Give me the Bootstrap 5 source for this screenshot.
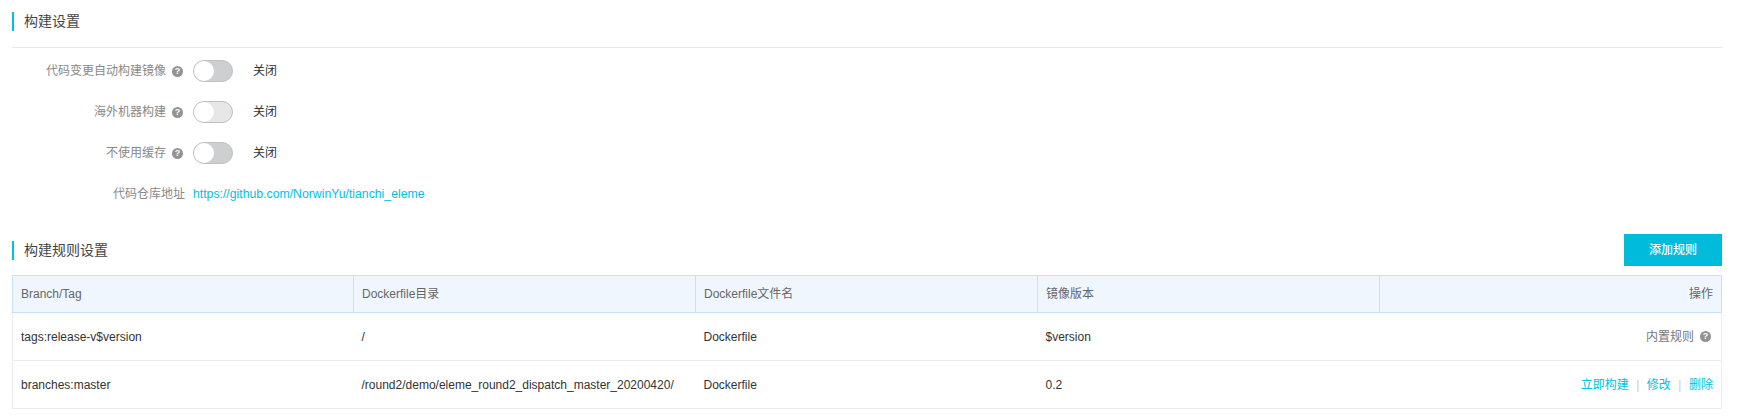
<!DOCTYPE html>
<html lang="zh-CN">

<head>
  <meta charset="UTF-8">
  <meta name="viewport" content="width=device-width, initial-scale=1.0">
  <title>构建设置</title>
  <link rel="stylesheet" href="https://cdn.jsdelivr.net/npm/bootstrap@5.3.0/dist/css/bootstrap.min.css">
  <style>
    body {
      font-family: "Liberation Sans", "Noto Sans CJK SC", sans-serif;
      font-size: 12px;
      color: #333;
      background: #fff;
    }

    .page-wrap {
      padding: 12px 15px 0 12px;
    }

    .section-title {
      border-left: 2px solid #00c1de;
      padding-left: 10px;
      font-size: 14px;
      line-height: 19px;
      height: 19px;
      color: #444;
    }

    .title-rule {
      border-bottom: 1px solid #e8e8e8;
      height: 17px;
      margin-bottom: 12px;
    }

    .setting-row {
      height: 22px;
      margin-bottom: 19px;
    }

    .setting-label {
      width: 181px;
      padding-right: 8px;
      color: #888;
    }

    .help-dot {
      width: 11px;
      height: 11px;
      border-radius: 50%;
      background: #939393;
      color: #fff;
      font-size: 9px;
      font-weight: 700;
      line-height: 11px;
      text-align: center;
    }

    .setting-label .help-dot {
      margin-left: 6px;
      margin-right: 2px;
    }

    .switch-box {
      position: relative;
      width: 40px;
      height: 22px;
      border: 1px solid #c0c0c0;
      border-radius: 11px;
      background: #cdcfd1;
    }

    .switch-box.is-light {
      background: #e6e7e7;
    }

    .switch-box::before {
      content: "";
      position: absolute;
      left: 0;
      top: 0;
      width: 20px;
      height: 20px;
      border-radius: 50%;
      background: #fff;
    }

    .switch-state {
      margin-left: 20px;
    }

    .brand-link {
      color: #00c1de;
      text-decoration: none;
    }

    .repo-link {
      font-size: 12.25px;
    }

    .rule-head {
      margin-top: 29px;
      height: 32px;
      margin-bottom: 9px;
    }

    .add-rule-btn {
      width: 98px;
      height: 32px;
      padding: 0;
      border: 0;
      border-radius: 0;
      background: #00bbdb;
      color: #fff;
      font-size: 12px;
      font-weight: 500;
    }

    .rule-table {
      table-layout: fixed;
      width: 100%;
      margin: 0;
      border-collapse: collapse;
      font-size: 12px;
    }

    .rule-table th,
    .rule-table td {
      padding: 0 8px;
      vertical-align: middle;
      box-shadow: none;
    }

    .rule-table th {
      height: 37px;
      background: #eff6fe;
      border: 1px solid #c4e0fb;
      color: #666;
      font-weight: 400;
    }

    .rule-table th:first-child {
      width: 341px;
    }

    .rule-table td {
      height: 48px;
      border: 1px solid #ececec;
      border-left: 0;
      border-right: 0;
      color: #333;
    }

    .rule-table td:first-child {
      border-left: 1px solid #ececec;
    }

    .rule-table td:last-child {
      border-right: 1px solid #ececec;
    }

    .rule-table tbody tr:first-child td {
      border-top: 0;
    }

    .builtin-note {
      color: #777;
      padding-right: 2px;
      gap: 6px;
    }

    .action-sep {
      color: #ccc;
      margin: 0 7.5px;
    }
  </style>
</head>

<body>

  <div class="page-wrap">
    <div class="section-title">构建设置</div>
    <div class="title-rule"></div>

    <div class="setting-row d-flex align-items-center">
      <div class="setting-label d-flex align-items-center justify-content-end">代码变更自动构建镜像<span class="help-dot">?</span></div>
      <span class="switch-box"></span>
      <span class="switch-state">关闭</span>
    </div>
    <div class="setting-row d-flex align-items-center">
      <div class="setting-label d-flex align-items-center justify-content-end">海外机器构建<span class="help-dot">?</span></div>
      <span class="switch-box is-light"></span>
      <span class="switch-state">关闭</span>
    </div>
    <div class="setting-row d-flex align-items-center">
      <div class="setting-label d-flex align-items-center justify-content-end">不使用缓存<span class="help-dot">?</span></div>
      <span class="switch-box"></span>
      <span class="switch-state">关闭</span>
    </div>
    <div class="setting-row d-flex align-items-center">
      <div class="setting-label text-end">代码仓库地址</div>
      <a class="brand-link repo-link" href="#">https://github.com/NorwinYu/tianchi_eleme</a>
    </div>

    <div class="rule-head d-flex align-items-center justify-content-between">
      <div class="section-title">构建规则设置</div>
      <button type="button" class="btn add-rule-btn">添加规则</button>
    </div>

    <table class="table rule-table">
      <thead>
        <tr>
          <th>Branch/Tag</th>
          <th>Dockerfile目录</th>
          <th>Dockerfile文件名</th>
          <th>镜像版本</th>
          <th class="text-end">操作</th>
        </tr>
      </thead>
      <tbody>
        <tr>
          <td>tags:release-v$version</td>
          <td>/</td>
          <td>Dockerfile</td>
          <td>$version</td>
          <td>
            <div class="d-flex align-items-center justify-content-end builtin-note">内置规则<span class="help-dot">?</span></div>
          </td>
        </tr>
        <tr>
          <td>branches:master</td>
          <td>/round2/demo/eleme_round2_dispatch_master_20200420/</td>
          <td>Dockerfile</td>
          <td>0.2</td>
          <td class="text-end"><a class="brand-link" href="#">立即构建</a><span class="action-sep">|</span><a class="brand-link" href="#">修改</a><span class="action-sep">|</span><a class="brand-link" href="#">删除</a></td>
        </tr>
      </tbody>
    </table>
  </div>

  <script src="https://cdn.jsdelivr.net/npm/bootstrap@5.3.0/dist/js/bootstrap.bundle.min.js"></script>
</body>

</html>
